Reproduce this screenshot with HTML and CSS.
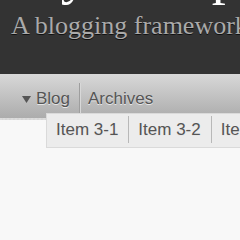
FILE: index.html
```html
<!DOCTYPE html>
<html lang="en">
<head>
    <meta charset="UTF-8">
    <meta name="viewport" content="width=device-width, initial-scale=1.0">
    <title>My Octopress Blog</title>
    <link rel="stylesheet" href="styles.css">
</head>
<body>
    <header class="site-header">
        <h1 class="site-title">My Octopress Blog</h1>
        <h2 class="site-subtitle">A blogging framework for hackers.</h2>
    </header>
    <nav class="main-nav">
        <ul class="nav-list">
            <li class="nav-item nav-open">
                <svg class="nav-arrow" width="9" height="7" viewBox="0 0 9 7">
                    <polygon points="0,0 9,0 4.5,7" fill="#555"/>
                </svg>
                <span>Blog</span>
                <ul class="sub-nav">
                    <li class="sub-item">Item 3-1</li>
                    <li class="sub-item">Item 3-2</li>
                    <li class="sub-item">Item 3-3</li>
                </ul>
            </li>
            <li class="nav-item">Archives</li>
        </ul>
    </nav>
    <div class="main"></div>
</body>
</html>
```

FILE: styles.css
```css
html, body {
    margin: 0;
    padding: 0;
    background: #f8f8f8;
    overflow: hidden;
}

.site-header {
    background: #333333;
    padding: 0 0 33px 11px;
    white-space: nowrap;
    overflow: hidden;
}

.site-title {
    font-family: "Liberation Serif", serif;
    font-weight: normal;
    font-size: 56px;
    line-height: 56px;
    color: #ffffff;
    margin: -54px 0 0 0;
}

.site-subtitle {
    font-family: "Liberation Serif", serif;
    font-weight: normal;
    font-size: 26px;
    line-height: 1.2;
    color: #aaaaaa;
    text-shadow: #111 0 1px 0;
    margin: 8px 0 0 0;
}

.main-nav {
    background: linear-gradient(#d8d8d8, #acacac);
    border-bottom: 2px dotted #dcdcdc;
    padding: 9px 0 4px 0;
    position: relative;
}

.nav-list {
    list-style: none;
    margin: 0;
    padding: 0 0 0 12px;
    display: flex;
}

.nav-item {
    font-family: "Liberation Sans", sans-serif;
    font-size: 17px;
    line-height: 25px;
    padding: 3px 9px 3px 10px;
    color: #555555;
    text-shadow: #e6e6e6 0 1px 0;
    display: flex;
    align-items: center;
    gap: 5px;
    white-space: nowrap;
}

.nav-item + .nav-item {
    border-left: 1px solid #9e9e9e;
    box-shadow: inset 1px 0 0 #d8d8d8;
    padding-left: 8px;
}

.nav-open {
    position: relative;
}

.nav-arrow {
    margin-top: 2px;
}

.sub-nav {
    position: absolute;
    left: 34px;
    top: 30px;
    list-style: none;
    margin: 0;
    padding: 2px 0 4px 0;
    background: #ececec;
    border: 1px solid #dadada;
    display: flex;
    z-index: 2;
}

.sub-item {
    font-family: "Liberation Sans", sans-serif;
    font-size: 17px;
    line-height: 25px;
    padding: 1px 10px 1px 9px;
    color: #555555;
    white-space: nowrap;
}

.sub-item + .sub-item {
    border-left: 1px solid #b8b8b8;
}

.main {
    height: 200px;
}
```
